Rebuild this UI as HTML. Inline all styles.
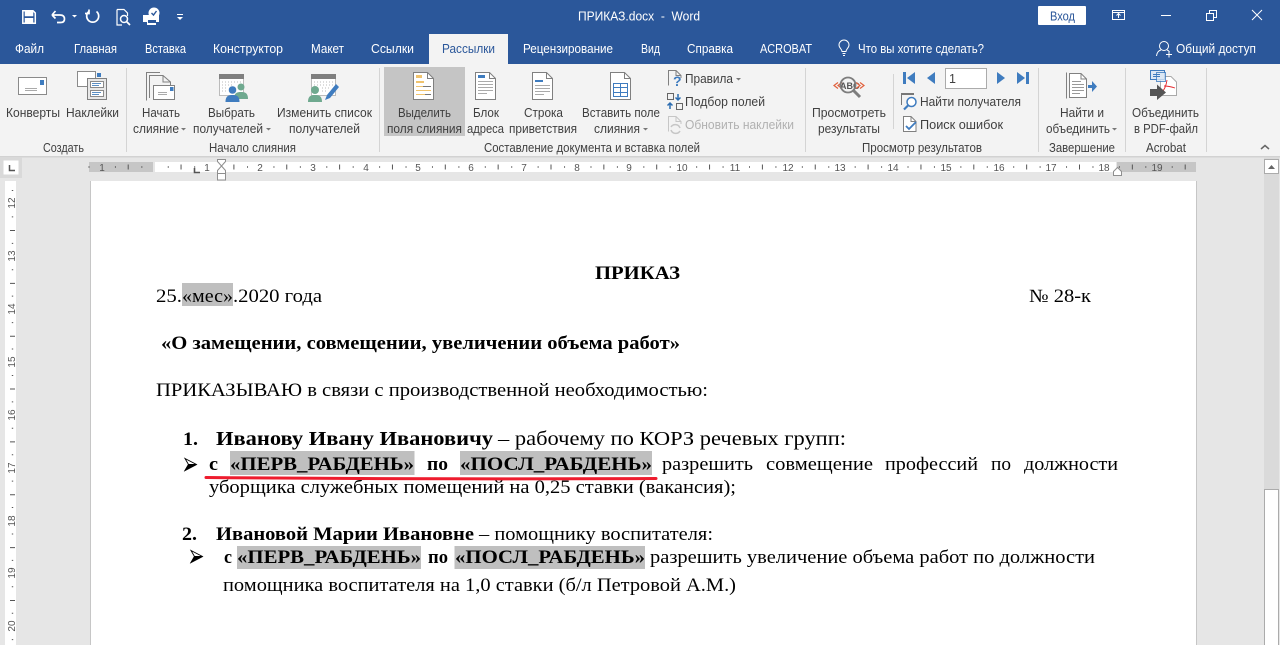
<!DOCTYPE html>
<html lang="ru"><head><meta charset="utf-8"><title>ПРИКАЗ.docx - Word</title>
<style>
html,body{margin:0;padding:0;width:1280px;height:645px;overflow:hidden;background:#e6e6e6}
svg{display:block}
.u text,.u{font-family:"Liberation Sans",sans-serif;font-size:12.5px;fill:#404040}
.w text{fill:#fff}
.d text{font-family:"Liberation Serif",serif;font-size:18.67px;fill:#000}
.b{font-weight:bold}
.n text{font-family:"Liberation Sans",sans-serif;font-size:10px;fill:#555;text-anchor:middle}
</style></head><body>
<svg width="1280" height="645" viewBox="0 0 1280 645" xmlns="http://www.w3.org/2000/svg">
<!-- backgrounds -->
<rect width="1280" height="645" fill="#e6e6e6"/>
<rect width="1280" height="64" fill="#2b579a"/>
<rect y="64" width="1280" height="92" fill="#f3f3f3"/>
<rect y="156" width="1280" height="1.5" fill="#d2d2d2"/>
<rect x="429" y="34" width="79" height="30" fill="#f3f3f3"/>
<rect x="384" y="67" width="81" height="69" fill="#c5c5c5"/>
<!-- separators -->
<g fill="#d4d4d4"><rect x="126" y="68" width="1" height="84"/><rect x="379" y="68" width="1" height="84"/><rect x="805" y="68" width="1" height="84"/><rect x="1038" y="68" width="1" height="84"/><rect x="1125" y="68" width="1" height="84"/><rect x="1206" y="68" width="1" height="84"/><rect x="893" y="74" width="1" height="55"/></g>

<!-- title bar icons -->
<g fill="none" stroke="#fff">
<g stroke-width="1.5"><path d="M22.800 10.800H33L35.300 13V23.300H22.800Z"/><path d="M25.500 11V15.500H32.500V11" fill="#fff"/><path d="M25.500 23V18.700H32.500V23" fill="#fff"/></g>
<path d="M52 15 55.500 11M52 15 55.500 18.500M52 15H60Q64.500 15 64.500 19 64.500 22.500 60.500 22.500H57" stroke-width="1.700"/>
<path d="M96.500 11.500A6 6 0 1 1 89 11.400M89 9.500V13.500H85" stroke-width="1.700"/>
<path d="M117 9.500H124L127.500 13V16M117 9.500V25H122" stroke-width="1.200"/>
<circle cx="124" cy="19" r="3.500" stroke-width="1.500"/><path d="M126.500 21.500 130 25" stroke-width="1.700"/>
</g>
<g fill="#fff">
<path d="M72 15h5l-2.500 2.500z"/>
<path d="M143 15h6v-3h8v3h2v7h-3v3h-9v-3h-4z"/>
<circle cx="154" cy="13" r="5.500" fill="#fff"/>
<path d="M151.500 13l2 2 3-4" fill="none" stroke="#2b579a" stroke-width="1.400"/>
<path d="M148 20h8v3h-8z" fill="#2b579a"/>
<rect x="177" y="14" width="6" height="1"/><path d="M177 17h6l-3 3z"/>
</g>
<!-- window controls -->
<rect x="1038" y="6" width="48" height="19" rx="1" fill="#fff"/>
<g fill="none" stroke="#fff" stroke-width="1">
<path d="M1112.500 10.500H1124.500V19.500H1112.500ZM1112.500 12.500H1124.500M1118.500 18V14M1116.500 15.500 1118.500 13.500 1120.500 15.500"/>
<path d="M1161 15.500H1171"/>
<path d="M1206.500 13.500H1213.500V20.500H1206.500ZM1209.500 13V10.500H1216.500V17.500H1214"/>
<path d="M1252 10 1262 20M1262 10 1252 20"/>
</g>
<g class="u w">
<text x="578" y="20.500" textLength="122" lengthAdjust="spacingAndGlyphs" xml:space="preserve">ПРИКАЗ.docx  -  Word</text>
</g>
<g class="u"><text x="1050" y="20.500" textLength="25" lengthAdjust="spacingAndGlyphs" style="fill:#2b579a">Вход</text></g>

<!-- tabs -->
<g class="u w">
<text x="15" y="53" textLength="29" lengthAdjust="spacingAndGlyphs">Файл</text>
<text x="74" y="53" textLength="43" lengthAdjust="spacingAndGlyphs">Главная</text>
<text x="145" y="53" textLength="41" lengthAdjust="spacingAndGlyphs">Вставка</text>
<text x="213" y="53" textLength="70" lengthAdjust="spacingAndGlyphs">Конструктор</text>
<text x="311" y="53" textLength="33" lengthAdjust="spacingAndGlyphs">Макет</text>
<text x="371" y="53" textLength="43" lengthAdjust="spacingAndGlyphs">Ссылки</text>
<text x="523" y="53" textLength="90" lengthAdjust="spacingAndGlyphs">Рецензирование</text>
<text x="641" y="53" textLength="19" lengthAdjust="spacingAndGlyphs">Вид</text>
<text x="687" y="53" textLength="46" lengthAdjust="spacingAndGlyphs">Справка</text>
<text x="760" y="53" textLength="52" lengthAdjust="spacingAndGlyphs">ACROBAT</text>
<text x="858" y="53" textLength="126" lengthAdjust="spacingAndGlyphs">Что вы хотите сделать?</text>
<text x="1176" y="53" textLength="80" lengthAdjust="spacingAndGlyphs">Общий доступ</text>
</g>
<g class="u"><text x="442" y="53" textLength="53" lengthAdjust="spacingAndGlyphs" style="fill:#2b579a">Рассылки</text></g>
<g fill="none" stroke="#fff" stroke-width="1">
<path d="M842 51.500C842 49 839 48 839 45A5 5 0 0 1 849 45C849 48 846 49 846 51.500ZM842.500 53.500H845.500M843 55.500H845"/>
<circle cx="1164" cy="46" r="4.500"/><path d="M1156.500 56C1157 52 1159 50.500 1161 50M1167 50C1168 50.300 1169 51 1169.500 52M1166 54.500H1172M1169 51.500V57.500"/>
</g>

<!-- ribbon labels -->
<g class="u">
<text x="6" y="117" textLength="54" lengthAdjust="spacingAndGlyphs">Конверты</text>
<text x="66" y="117" textLength="53" lengthAdjust="spacingAndGlyphs">Наклейки</text>
<text x="142" y="117" textLength="38" lengthAdjust="spacingAndGlyphs">Начать</text>
<text x="133" y="133" textLength="46" lengthAdjust="spacingAndGlyphs">слияние</text>
<text x="208" y="117" textLength="47" lengthAdjust="spacingAndGlyphs">Выбрать</text>
<text x="193" y="133" textLength="70" lengthAdjust="spacingAndGlyphs">получателей</text>
<text x="277" y="117" textLength="95" lengthAdjust="spacingAndGlyphs">Изменить список</text>
<text x="289" y="133" textLength="71" lengthAdjust="spacingAndGlyphs">получателей</text>
<text x="398" y="117" textLength="53" lengthAdjust="spacingAndGlyphs">Выделить</text>
<text x="387" y="133" textLength="75" lengthAdjust="spacingAndGlyphs">поля слияния</text>
<text x="473" y="117" textLength="26" lengthAdjust="spacingAndGlyphs">Блок</text>
<text x="467" y="133" textLength="37" lengthAdjust="spacingAndGlyphs">адреса</text>
<text x="524" y="117" textLength="39" lengthAdjust="spacingAndGlyphs">Строка</text>
<text x="509" y="133" textLength="68" lengthAdjust="spacingAndGlyphs">приветствия</text>
<text x="582" y="117" textLength="78" lengthAdjust="spacingAndGlyphs">Вставить поле</text>
<text x="594" y="133" textLength="46" lengthAdjust="spacingAndGlyphs">слияния</text>
<text x="685" y="83" textLength="48" lengthAdjust="spacingAndGlyphs">Правила</text>
<text x="685" y="106" textLength="80" lengthAdjust="spacingAndGlyphs">Подбор полей</text>
<text x="685" y="129" textLength="109" lengthAdjust="spacingAndGlyphs" style="fill:#b1b1b1">Обновить наклейки</text>
<text x="812" y="117" textLength="74" lengthAdjust="spacingAndGlyphs">Просмотреть</text>
<text x="818" y="133" textLength="62" lengthAdjust="spacingAndGlyphs">результаты</text>
<text x="920" y="106" textLength="101" lengthAdjust="spacingAndGlyphs">Найти получателя</text>
<text x="920" y="129" textLength="83" lengthAdjust="spacingAndGlyphs">Поиск ошибок</text>
<text x="1060" y="117" textLength="44" lengthAdjust="spacingAndGlyphs">Найти и</text>
<text x="1046" y="133" textLength="64" lengthAdjust="spacingAndGlyphs">объединить</text>
<text x="1132" y="117" textLength="67" lengthAdjust="spacingAndGlyphs">Объединить</text>
<text x="1134" y="133" textLength="64" lengthAdjust="spacingAndGlyphs">в PDF-файл</text>
<text x="43" y="152" textLength="41" lengthAdjust="spacingAndGlyphs">Создать</text>
<text x="209" y="152" textLength="87" lengthAdjust="spacingAndGlyphs">Начало слияния</text>
<text x="484" y="152" textLength="216" lengthAdjust="spacingAndGlyphs">Составление документа и вставка полей</text>
<text x="862" y="152" textLength="120" lengthAdjust="spacingAndGlyphs">Просмотр результатов</text>
<text x="1049" y="152" textLength="66" lengthAdjust="spacingAndGlyphs">Завершение</text>
<text x="1146" y="152" textLength="40" lengthAdjust="spacingAndGlyphs">Acrobat</text>
</g>
<!-- carets -->
<g fill="#777"><path d="M181 128h5l-2.500 2.500z"/><path d="M266 128h5l-2.500 2.500z"/><path d="M643 128h5l-2.500 2.500z"/><path d="M736 78h5l-2.500 2.500z"/><path d="M1112 128h5l-2.500 2.500z"/></g>

<!-- Envelopes -->
<g fill="none" stroke="#8a8a8a">
<rect x="18.500" y="77.500" width="28" height="17" fill="#fff"/>
<path d="M25 88.500H37M25 90.500H37" stroke="#aaa"/>
<path d="M77.500 71.500H95.500V86.500H77.500Z" fill="#fff"/>
<rect x="87.500" y="78.500" width="19" height="21" fill="#e8e8e8" stroke="#808080"/>
<rect x="90.500" y="81.500" width="13" height="6" fill="#fff"/><rect x="90.500" y="90.500" width="13" height="6" fill="#fff"/>
<path d="M92 83.500H101M92 85.500H99M92 92.500H101M92 94.500H99" stroke="#5b8fc4"/>
</g>
<rect x="40" y="80" width="4" height="5" fill="#3f7cbf"/>
<rect x="97" y="73" width="4" height="4" fill="#3f7cbf"/>
<!-- Start merge -->
<g fill="none" stroke="#808080">
<path d="M146.500 100.500V72.500H160"/>
<path d="M149.500 98V75.500H163L170.500 82V85" fill="#f3f3f3"/>
<path d="M163 75.500V82H170.500"/>
<rect x="153.500" y="85.500" width="21" height="14" fill="#fff"/>
<path d="M158 92.500H167M158 94.500H167" stroke="#aaa"/>
</g>
<rect x="170" y="87" width="3.500" height="4" fill="#3f7cbf"/>
<!-- Calendars -->
<g>
<rect x="219.500" y="74.500" width="24" height="21" fill="#fff" stroke="#bbb"/><rect x="219" y="74" width="25" height="5" fill="#7f7f7f"/>
<rect x="311.500" y="74.500" width="24" height="21" fill="#fff" stroke="#bbb"/><rect x="311" y="74" width="25" height="5" fill="#7f7f7f"/>
<path d="M222 82H241M222 85H232M222 88H228M222 91H228" stroke="#bbb" stroke-dasharray="1 2"/>
<path d="M314 82H333M314 85H333M322 88H330M322 91H326" stroke="#bbb" stroke-dasharray="1 2"/>
<circle cx="241" cy="87" r="3.500" fill="#6fa98f"/><path d="M234 99C234 93 237 92 241 92S248 93 248 99Z" fill="#6fa98f"/>
<circle cx="232.500" cy="90" r="4" fill="#3f7cbf" stroke="#f3f3f3" stroke-width=".5"/><path d="M225.500 102C225.500 96 228.500 95 232.500 95S239.500 96 239.500 102Z" fill="#3f7cbf"/>
<circle cx="315" cy="90" r="4" fill="#6fa98f"/><path d="M308 102C308 96 311 95 315 95S322 96 322 102Z" fill="#6fa98f"/>
<path d="M325 100 327 95 336 84 339 87 330 98Z" fill="#3f7cbf"/>
</g>
<!-- docs -->
<g fill="#fff" stroke="#808080">
<path d="M413.500 72.500H427.500L433.500 78.500V99.500H413.500Z"/>
<path d="M475.500 72.500H489.500L495.500 78.500V99.500H475.500Z"/>
<path d="M532.500 72.500H546.500L552.500 78.500V99.500H532.500Z"/>
<path d="M610.500 72.500H624.500L630.500 78.500V99.500H610.500Z"/>
</g>
<g fill="none" stroke="#808080"><path d="M427.500 72.500V78.500H433.500M489.500 72.500V78.500H495.500M546.500 72.500V78.500H552.500M624.500 72.500V78.500H630.500"/></g>
<g fill="#f0c36d"><rect x="416" y="75" width="6" height="3"/><rect x="416" y="81" width="8" height="2"/><rect x="416" y="86" width="15" height="1"/><rect x="416" y="90" width="15" height="1"/><rect x="416" y="94" width="9" height="1"/></g>
<path d="M423 86.500H431M425 94.500H431" stroke="#777"/>
<rect x="478" y="75" width="7" height="3" fill="#3f7cbf"/>
<path d="M478 81.500H493M478 84.500H493M478 87.500H493M478 90.500H493M478 93.500H487" stroke="#aaa"/>
<rect x="535" y="80" width="8" height="2" fill="#3f7cbf"/>
<path d="M535 85.500H550M535 88.500H550M535 91.500H550M535 94.500H544" stroke="#aaa"/>
<path d="M613.500 83.500H627.500V96.500H613.500ZM613.500 87.500H627.500M613.500 92.500H627.500M620.500 83.500V96.500" fill="none" stroke="#3f7cbf"/>
<!-- small icons -->
<g fill="none" stroke="#808080"><path d="M668.500 85.500V70.500H676L681 75.500V78"/><path d="M676 70.500V75.500H681"/>
<rect x="667.500" y="93.500" width="6" height="6" stroke="#666"/><rect x="676.500" y="103.500" width="6" height="6" stroke="#666"/>
<g stroke="#c6c6c6"><path d="M668.500 131.500V116.500H676L681 121.500V124"/><path d="M676 116.500V121.500H681"/></g></g>
<text x="673" y="86" style="font:bold 14px 'Liberation Sans',sans-serif;fill:#3f7cbf">?</text>
<path d="M678 94V100M675.500 97.500 678 100 680.500 97.500M670 109V103M667.500 105.500 670 103 672.500 105.500" fill="none" stroke="#2b6cb0" stroke-width="1.500"/>
<path d="M680 128A5 5 0 0 0 671 127M671 130A5 5 0 0 0 680 131" fill="none" stroke="#c6c6c6" stroke-width="1.500"/>
<!-- preview -->
<g font-family="Liberation Sans,sans-serif">
<text x="840" y="89" style="font-size:9px;font-weight:bold;fill:#555">ABC</text>
<path d="M838 82.500 834 85.500 838 88.500M842 82.500 838 85.500 842 88.500M860 82.500 864 85.500 860 88.500M856 82.500 860 85.500 856 88.500" fill="none" stroke="#e2603c" stroke-width="1.200"/>
<circle cx="848" cy="85" r="7.500" fill="none" stroke="#7d7d7d" stroke-width="1.800"/>
<path d="M853.500 90.500 860 97" stroke="#7d7d7d" stroke-width="3"/>
</g>
<!-- nav -->
<g fill="#3f7cbf">
<rect x="903" y="72" width="3" height="12"/><path d="M915 72V84L907 78Z"/>
<path d="M935 72V84L927 78Z"/>
<path d="M997 72V84L1005 78Z"/>
<path d="M1017 72V84L1025 78Z"/><rect x="1026" y="72" width="3" height="12"/>
</g>
<rect x="945.500" y="68.500" width="41" height="20" fill="#fff" stroke="#ababab"/>
<g class="u"><text x="949" y="83">1</text></g>
<!-- find recipient / errors -->
<path d="M901.500 105V93.500H914" fill="none" stroke="#777" stroke-width="1"/><rect x="901" y="93" width="13" height="2" fill="#777"/>
<circle cx="911.500" cy="102" r="4.500" fill="#fff" stroke="#3f7cbf" stroke-width="1.500"/><path d="M908 105.500 904 109.500" stroke="#3f7cbf" stroke-width="2.200"/>
<path d="M903.500 131.500V116.500H911L916 121.500V131.500Z" fill="#fff" stroke="#808080"/><path d="M911 116.500V121.500H916" fill="none" stroke="#808080"/>
<path d="M906 126 909 129 916 122" fill="none" stroke="#3f7cbf" stroke-width="1.800"/>
<!-- finish -->
<g fill="none" stroke="#808080"><path d="M1066.500 98.500V72.500"/><path d="M1069.500 97.500V73.500H1081L1086.500 79V97.500Z" fill="#fff"/><path d="M1081 73.500V79H1086.500"/></g>
<path d="M1072 81.500H1081M1072 84.500H1084M1072 87.500H1084M1072 90.500H1084M1072 93.500H1080" stroke="#999"/>
<path d="M1088 85H1092V81L1097 86.500 1092 92V88H1088Z" fill="#3f7cbf"/>
<!-- acrobat -->
<path d="M1160.500 76.500H1171L1176.500 82V95.500H1160.500Z" fill="#fff" stroke="#aaa"/>
<rect x="1150.500" y="70.500" width="14" height="9" fill="#dce8f5" stroke="#3f7cbf"/><rect x="1156.500" y="72.500" width="9" height="9" fill="#dce8f5" stroke="#3f7cbf" opacity=".8"/>
<path d="M1153 74.500H1160M1153 76.500H1160" stroke="#3f7cbf"/>
<path d="M1167 80C1166 87 1164 90 1162 92M1164 86C1168 86 1172 87 1175 88" fill="none" stroke="#e5262c" stroke-width=".9"/>
<path d="M1150 89H1157V84.500L1166 92.500 1157 100V96H1150Z" fill="#555"/>
<path d="M1261 149 1265 145.500 1269 149" fill="none" stroke="#666" stroke-width="1.500"/>

<!-- ruler -->
<rect x="89" y="162" width="64" height="10" fill="#c6c6c6"/>
<rect x="155" y="162" width="961" height="10" fill="#fff"/>
<rect x="1117" y="162" width="79" height="10" fill="#c6c6c6"/>
<line x1="88.500" y1="167" x2="1196" y2="167" stroke="#555" stroke-width="1.400" stroke-dasharray="1 25.420"/>
<line x1="127.700" y1="167" x2="1196" y2="167" stroke="#555" stroke-width="5" stroke-dasharray="1 51.850"/>
<g class="n">
<text x="102" y="171">1</text><text x="207" y="171">1</text><text x="260" y="171">2</text><text x="313" y="171">3</text><text x="366" y="171">4</text><text x="418" y="171">5</text><text x="471" y="171">6</text><text x="524" y="171">7</text><text x="577" y="171">8</text><text x="629" y="171">9</text><text x="682" y="171">10</text><text x="735" y="171">11</text><text x="788" y="171">12</text><text x="840" y="171">13</text><text x="893" y="171">14</text><text x="946" y="171">15</text><text x="999" y="171">16</text><text x="1051" y="171">17</text><text x="1104" y="171">18</text><text x="1157" y="171">19</text>
</g>
<path d="M194.500 168V172.500H200" fill="none" stroke="#555" stroke-width="1.600"/>
<g fill="#fff" stroke="#8f8f8f"><path d="M217.500 159.500H225.500V161.500L221.500 166 217.500 161.500Z"/><path d="M221.500 166 225.500 170.500V173.500H217.500V170.500Z"/><rect x="217.500" y="173.500" width="8" height="6.500"/><path d="M1113.500 175.500V171.500L1117.500 167.500 1121.500 171.500V175.500Z"/></g>
<rect x="0" y="157" width="22" height="21" fill="#d9d9d9"/>
<rect x="3.500" y="160.500" width="15" height="14" fill="#fff"/>
<path d="M9.500 165V170.500H15" fill="none" stroke="#555" stroke-width="1.500"/>

<!-- vertical ruler -->
<rect x="5" y="181" width="11" height="464" fill="#fff"/>
<line x1="12.500" y1="190" x2="12.500" y2="645" stroke="#555" stroke-width="1.400" stroke-dasharray="1 25.420"/>
<line x1="12.500" y1="230" x2="12.500" y2="645" stroke="#555" stroke-width="5" stroke-dasharray="1 51.850"/>
<g class="n">
<text transform="translate(15 203) rotate(-90)">12</text>
<text transform="translate(15 256) rotate(-90)">13</text>
<text transform="translate(15 309) rotate(-90)">14</text>
<text transform="translate(15 362) rotate(-90)">15</text>
<text transform="translate(15 415) rotate(-90)">16</text>
<text transform="translate(15 468) rotate(-90)">17</text>
<text transform="translate(15 521) rotate(-90)">18</text>
<text transform="translate(15 573) rotate(-90)">19</text>
<text transform="translate(15 626) rotate(-90)">20</text>
</g>

<!-- page -->
<rect x="90" y="181" width="1107" height="464" fill="#c6c6c6"/>
<rect x="91" y="181" width="1105" height="464" fill="#fff"/>
<!-- scrollbar -->
<rect x="1264" y="157" width="15" height="488" fill="#dadada"/>
<rect x="1264.500" y="159.500" width="14" height="14" fill="#fff" stroke="#ababab"/>
<path d="M1268 169 1271.500 165 1275 169Z" fill="#666"/>
<rect x="1264.500" y="489.500" width="14" height="160" fill="#fff" stroke="#ababab"/>

<!-- highlights -->
<g fill="#bfbfbf">
<rect x="182" y="283" width="51" height="23"/>
<rect x="230" y="451" width="184.500" height="24"/>
<rect x="460" y="451" width="192" height="24"/>
<rect x="237" y="546" width="184" height="23"/>
<rect x="454.500" y="546" width="190.500" height="23"/>
</g>

<!-- document -->
<g class="d">
<text class="b" x="595" y="279" textLength="85" lengthAdjust="spacingAndGlyphs">ПРИКАЗ</text>
<text x="156" y="302" textLength="26" lengthAdjust="spacingAndGlyphs">25.</text>
<text x="182" y="302" textLength="51" lengthAdjust="spacingAndGlyphs">«мес»</text>
<text x="233" y="302" textLength="89" lengthAdjust="spacingAndGlyphs">.2020 года</text>
<text x="1029" y="302" textLength="62" lengthAdjust="spacingAndGlyphs">№ 28-к</text>
<text class="b" x="161" y="349" textLength="519" lengthAdjust="spacingAndGlyphs">«О замещении, совмещении, увеличении объема работ»</text>
<text x="156" y="396" textLength="552" lengthAdjust="spacingAndGlyphs">ПРИКАЗЫВАЮ в связи с производственной необходимостью:</text>

<text class="b" x="183" y="445" textLength="15" lengthAdjust="spacingAndGlyphs">1.</text>
<text class="b" x="216" y="445" textLength="277" lengthAdjust="spacingAndGlyphs" style="font-size:20px">Иванову Ивану Ивановичу</text>
<text x="498" y="445" textLength="348" lengthAdjust="spacingAndGlyphs" style="font-size:20px">– рабочему по КОРЗ речевых групп:</text>

<g stroke="#000" stroke-width=".9" stroke-linejoin="miter"><path d="M185 458.500 196.500 464.500 185 470.500 188.500 464.500Z" fill="#fff"/><path d="M188.500 464.500H196.500L185 470.500Z" fill="#000"/></g>
<text class="b" x="209" y="470" textLength="9" lengthAdjust="spacingAndGlyphs">с</text>
<text class="b" x="230" y="470" textLength="184" lengthAdjust="spacingAndGlyphs">«ПЕРВ_РАБДЕНЬ»</text>
<text class="b" x="427" y="470" textLength="21" lengthAdjust="spacingAndGlyphs">по</text>
<text class="b" x="460" y="470" textLength="192" lengthAdjust="spacingAndGlyphs">«ПОСЛ_РАБДЕНЬ»</text>
<text x="662" y="470" textLength="91" lengthAdjust="spacingAndGlyphs">разрешить</text>
<text x="766" y="470" textLength="107" lengthAdjust="spacingAndGlyphs">совмещение</text>
<text x="885" y="470" textLength="93" lengthAdjust="spacingAndGlyphs">профессий</text>
<text x="991" y="470" textLength="20" lengthAdjust="spacingAndGlyphs">по</text>
<text x="1024" y="470" textLength="94" lengthAdjust="spacingAndGlyphs">должности</text>
<text x="209" y="493" textLength="527" lengthAdjust="spacingAndGlyphs">уборщика служебных помещений на 0,25 ставки (вакансия);</text>

<text class="b" x="182" y="540" textLength="15" lengthAdjust="spacingAndGlyphs">2.</text>
<text class="b" x="216" y="540" textLength="258" lengthAdjust="spacingAndGlyphs">Ивановой Марии Ивановне</text>
<text x="479" y="540" textLength="234" lengthAdjust="spacingAndGlyphs">– помощнику воспитателя:</text>

<g stroke="#000" stroke-width=".9" stroke-linejoin="miter"><path d="M191 550.500 202.500 556.500 191 562.500 194.500 556.500Z" fill="#fff"/><path d="M194.500 556.500H202.500L191 562.500Z" fill="#000"/></g>
<text class="b" x="224" y="563" textLength="8" lengthAdjust="spacingAndGlyphs">с</text>
<text class="b" x="237" y="563" textLength="184" lengthAdjust="spacingAndGlyphs">«ПЕРВ_РАБДЕНЬ»</text>
<text class="b" x="428" y="563" textLength="20" lengthAdjust="spacingAndGlyphs">по</text>
<text class="b" x="455" y="563" textLength="190" lengthAdjust="spacingAndGlyphs">«ПОСЛ_РАБДЕНЬ»</text>
<text x="650" y="563" textLength="445" lengthAdjust="spacingAndGlyphs">разрешить увеличение объема работ по должности</text>
<text x="223" y="591" textLength="513" lengthAdjust="spacingAndGlyphs">помощника воспитателя на 1,0 ставки (б/л Петровой А.М.)</text>
</g>
<path d="M206 477.500Q430 479.500 656 478.500" fill="none" stroke="#ee1c2e" stroke-width="3" stroke-linecap="round"/>
</svg>
</body></html>
